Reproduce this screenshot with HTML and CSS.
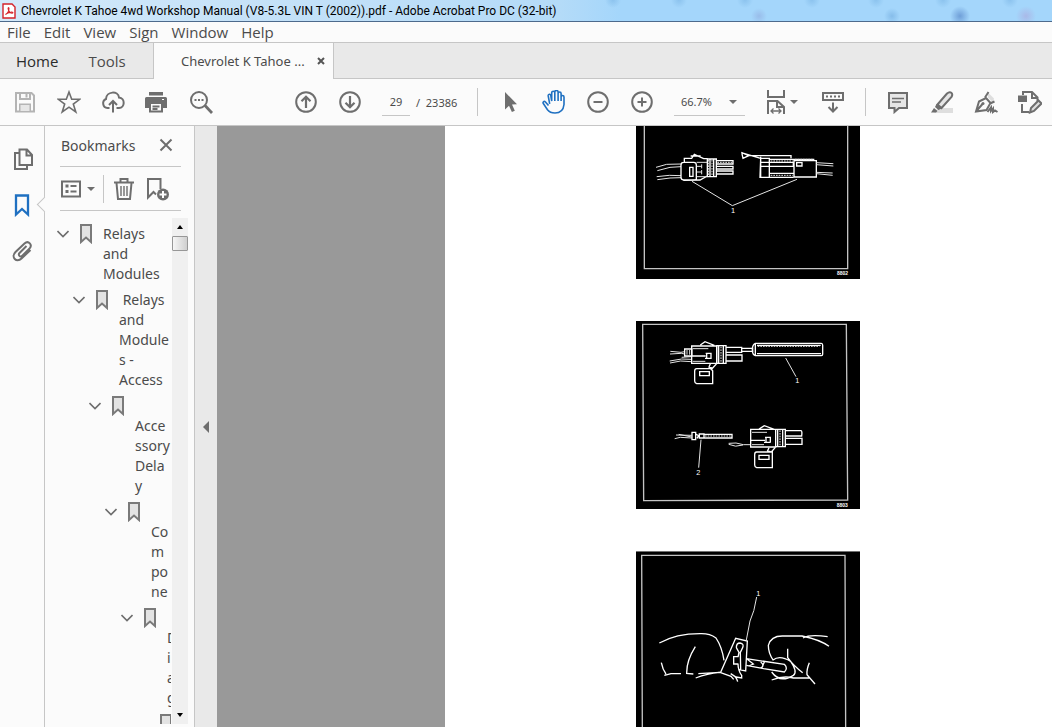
FILE: index.html
```
<!DOCTYPE html>
<html lang="en">
<head>
  <meta charset="UTF-8">
  <meta name="viewport" content="width=device-width, initial-scale=1">
  <title>Chevrolet K Tahoe 4wd Workshop Manual</title>
  <link rel="stylesheet" href="styles.css">
</head>
<body>

  <header class="titlebar">
    <svg class="app-icon" width="14" height="16" viewBox="0 0 14 16">
      <path d="M1 1h9l3 3v11H1z" fill="#fff" stroke="#d4232b" stroke-width="1.4"/>
      <path d="M3.500 11.500c2-1 3.500-4 3.500-6 0-1.500-1.300-1-.8.6.7 2.300 2.500 4 4 4.100 1.300 0 .8-1.300-1-1.100-2 .1-4.500 1-5.700 2.400z" fill="none" stroke="#d4232b" stroke-width="1.100"/>
    </svg>
    <span>Chevrolet K Tahoe 4wd Workshop Manual (V8-5.3L VIN T (2002)).pdf - Adobe Acrobat Pro DC (32-bit)</span>
  </header>

  <nav class="menubar">
    <button>File</button>
    <button>Edit</button>
    <button>View</button>
    <button>Sign</button>
    <button>Window</button>
    <button>Help</button>
  </nav>

  <nav class="tabs">
    <div class="tabs-main">
      <button class="home">Home</button>
      <button>Tools</button>
    </div>
    <div class="tab-doc">
      <button class="tab-name">Chevrolet K Tahoe ...</button>
      <button class="tab-close" aria-label="Close tab">
        <svg width="8" height="8" viewBox="0 0 8 8"><path d="M1 1l6 6M7 1L1 7" stroke="#555" stroke-width="2"/></svg>
      </button>
    </div>
  </nav>

  <div class="toolbar">
    <div class="group">
      <button class="tool disabled" aria-label="Save">
        <svg viewBox="0 0 24 24"><path d="M3 3h15.500l2.500 2.500V21.500H3z"/><path d="M7 3v6h10V3M13.500 4v3.500M7 21.500v-7h10v7" /><path d="M7.500 15h9v6h-9z" fill="#e6e6e6" stroke="none"/></svg>
      </button>
      <button class="tool" aria-label="Add to starred">
        <svg viewBox="0 0 24 24"><path d="M12 2l2.700 7.200 8 .1-6.400 4.700 2.500 7.900L12 17.200 5.200 21.900l2.500-7.900L1.300 9.300l8-.1z" stroke-width="1.600"/></svg>
      </button>
      <button class="tool" aria-label="Upload">
        <svg viewBox="0 0 24 24"><path d="M8.500 18H6.500A4.700 4.700 0 0 1 5 9c.2-8 12.300-8.500 13-1.500 6.500.5 6 10.500 0 10.500h-2.500"/><path d="M12 22.500V11.500M8 15l4-4 4 4"/></svg>
      </button>
      <button class="tool" aria-label="Print">
        <svg viewBox="0 0 24 24"><path d="M4 2h14v3.500H4zM0 8.500q0-1.500 1.500-1.500h19q1.500 0 1.500 1.500V18h-4v-4H4v4H0z" fill="#6e6e6e" stroke="none"/><path d="M5 14v7.500h12V14M7.500 16.500h7M7.500 19h5"/><path d="M17 9.500h2" stroke="#fff" stroke-width="1"/></svg>
      </button>
      <button class="tool" aria-label="Find text">
        <svg viewBox="0 0 24 24"><circle cx="10" cy="10" r="8"/><path d="M16 15.500l7 7.500" stroke-width="2.800"/><path d="M5.500 9h2v2h-2zM9 9h2v2H9zM12.500 9h2v2h-2z" fill="#6e6e6e" stroke="none"/></svg>
      </button>
    </div>

    <div class="group group-pages">
      <button class="tool" aria-label="Previous page">
        <svg viewBox="0 0 24 24"><circle cx="12" cy="12" r="9.800"/><path d="M12 18V7M7.500 11.200L12 6.700l4.500 4.500" stroke-width="2.200"/></svg>
      </button>
      <button class="tool" aria-label="Next page">
        <svg viewBox="0 0 24 24"><circle cx="12" cy="12" r="9.800"/><path d="M12 6v11M7.500 12.800l4.500 4.500 4.500-4.500" stroke-width="2.200"/></svg>
      </button>
      <input class="page-number" type="text" value="29" aria-label="Page number">
      <span class="page-total">/&nbsp; 23386</span>
    </div>

    <div class="group group-view">
      <button class="tool" aria-label="Select">
        <svg viewBox="0 0 24 24"><path d="M7 2l12 12.300-5 .3 2.800 6.200-2.900 1.300-2.900-6.300-4 3.600z" fill="#6e6e6e" stroke="none"/></svg>
      </button>
      <button class="tool active" aria-label="Pan">
        <svg viewBox="0 0 24 24"><path d="M6.500 15.500L3.500 12c-1.500-1.500-3.200.2-2 1.800l4 6C7.500 22.500 9.500 23 13 23c5.500 0 8.500-3.500 9-8.500V7c0-2-2.900-2-2.900 0v4V3.500c0-2-3-2-3 0V11 2c0-2-3.300-2-3.300 0v9V2.800c0-2-3.100-2-3.100 0V11L8.800 5.500c-.3-1.800-2.800-1.500-2.600.4l1.500 8" stroke-width="1.600"/></svg>
      </button>
      <button class="tool" aria-label="Zoom out">
        <svg viewBox="0 0 24 24"><circle cx="12" cy="12" r="9.800"/><path d="M7.500 12h9"/></svg>
      </button>
      <button class="tool" aria-label="Zoom in">
        <svg viewBox="0 0 24 24"><circle cx="12" cy="12" r="9.800"/><path d="M7.500 12h9M12 7.500v9"/></svg>
      </button>
      <div class="zoom">
        <select aria-label="Zoom level"><option>66.7%</option></select>
        <svg class="caret" width="8" height="4" viewBox="0 0 8 4"><path d="M0 0h8L4 4z"/></svg>
      </div>
      <button class="tool tool-fit" aria-label="Fit width">
        <svg viewBox="0 0 24 24"><path d="M4 0v7h16V0"/><path d="M4 24V11h9.500l6.500 6v7M13 11v6h7"/><path d="M7 21h10M9.500 18.500L7 21l2.500 2.500M14.500 18.500L17 21l-2.500 2.500" stroke-width="1.300"/></svg>
        <svg class="caret" width="8" height="4" viewBox="0 0 8 4"><path d="M0 0h8L4 4z"/></svg>
      </button>
      <button class="tool" aria-label="Page display">
        <svg viewBox="0 0 24 24"><path d="M2 3h20v7H2z"/><path d="M5 6.500h14" stroke-dasharray="2 2"/><path d="M12 12.500v9M7.500 17l4.500 4.500 4.500-4.500"/></svg>
      </button>
    </div>

    <div class="group group-annotate">
      <button class="tool" aria-label="Add comment">
        <svg viewBox="0 0 24 24"><path d="M3 3h18v15h-8l-4.500 4V18H3z" fill="#e6e6e6"/><path d="M6 8.500h12M6 12h9" stroke-width="1.300"/></svg>
      </button>
      <button class="tool" aria-label="Highlight">
        <svg viewBox="0 0 24 24"><path d="M8 18h15v5H4z" fill="#dedede" stroke="none"/><path d="M7.500 14.500L17 3.500c3.500-3 6.500 0 4.500 3.500L11.500 18z" fill="#e6e6e6"/><path d="M6.500 14l5 4.500-3 1.500-3.500-3zM4 18l3.500 3-1.500 1.500H1z" fill="#6e6e6e" stroke="none"/></svg>
      </button>
      <button class="tool" aria-label="Sign document">
        <svg viewBox="0 0 24 24"><path d="M14 2.500l6 6-1 4-5-5z" fill="#dedede" stroke="none"/><path d="M2 21.500L5 11.500l7-3.500 4.500 5L12.500 20zM2 21.500l6.500-7.500M11 7.500l3.500-5.500M16 13.500l4.500-2"/><circle cx="9" cy="13.500" r="1.500" fill="#6e6e6e" stroke="none"/><path d="M13.500 22l3.500-4.500V21l2-2.500V22l2-1.500 2.500 1.500"/></svg>
      </button>
      <button class="tool" aria-label="Edit document">
        <svg viewBox="0 0 24 24"><path d="M5 5V2h9l5.500 5.500V11M14 2v6h5.500M4 14v8h7"/><path d="M0 5.500h9v6.500H0z" fill="#6e6e6e" stroke="none"/><path d="M12 22.500l1-4.500 7.500-7.500 3 3-7.500 7.500z" fill="#dedede"/></svg>
      </button>
    </div>
  </div>

  <main class="workspace">
    <nav class="rail">
      <button aria-label="Page thumbnails">
        <svg viewBox="0 0 24 24"><path d="M8.500 2.500h7.500l5 5.500v10H8.500zM15.500 3v5.500h5"/><path d="M8 6H4v16h12v-3.500"/></svg>
      </button>
      <button class="active" aria-label="Bookmarks">
        <svg viewBox="0 0 24 24"><path d="M5 2.500h12v19l-6-5.500-6 5.500z" stroke-width="2.300"/></svg>
      </button>
      <button aria-label="Attachments">
        <svg viewBox="0 0 24 24"><path d="M15.500 7L8.500 14c-2 2 .8 4.800 2.800 2.800l7-7C22 6 17.500 1 13.500 4.500L4.500 13C-.5 18 5.500 24.500 10.500 19.500L19.500 11"/></svg>
      </button>
    </nav>

    <aside class="panel">
      <div class="panel-head">
        <h2>Bookmarks</h2>
        <button aria-label="Close panel">
          <svg width="14" height="14" viewBox="0 0 14 14"><path d="M1.500 1.500l11 11M12.500 1.500l-11 11" stroke="#6e6e6e" stroke-width="2"/></svg>
        </button>
      </div>
      <div class="panel-tools">
        <button class="options" aria-label="Options">
          <svg width="20" height="18" viewBox="0 0 20 18"><path d="M1 1.500h18v15H1z"/><path d="M4.500 6h3M4.500 11.500h3" stroke-width="3"/><path d="M9.500 6h6M9.500 11.500h6"/></svg>
          <svg class="caret" width="8" height="4" viewBox="0 0 8 4"><path d="M0 0h8L4 4z"/></svg>
        </button>
        <button class="trash" aria-label="Delete bookmark">
          <svg width="20" height="22" viewBox="0 0 20 22"><path d="M0 4.500h20M6.500 4V1h7v3M2.500 5l1.500 16h12l1.500-16"/><path d="M7 8v10M10 8v10M13 8v10" stroke-width="1.400"/></svg>
        </button>
        <button aria-label="New bookmark">
          <svg width="24" height="24" viewBox="0 0 24 24"><path d="M10 17.500L7.500 15 2 20.500V2h12.500v10"/><circle cx="17" cy="17.500" r="6" fill="#6e6e6e" stroke="none"/><path d="M13.500 17.500h7M17 14v7" stroke="#fff"/></svg>
        </button>
      </div>

      <div class="tree-wrap">
        <ul class="tree" id="tree"></ul>
        <div class="scrollbar">
          <button aria-label="Scroll up"><svg width="6" height="4" viewBox="0 0 6 4"><path d="M0 4h6L3 0z"/></svg></button>
          <div class="thumb"></div>
          <button class="down" aria-label="Scroll down"><svg width="6" height="4" viewBox="0 0 6 4"><path d="M0 0h6L3 4z"/></svg></button>
        </div>
      </div>
    </aside>

    <button class="collapse" aria-label="Collapse panel">
      <svg width="6" height="12" viewBox="0 0 6 12"><path d="M6 0v12L0 6z" fill="#6e6e6e"/></svg>
    </button>

    <div class="viewer">
      <article class="sheet">
        <svg class="figure" width="224" height="153" viewBox="18 18 672 459">
          <path class="frame" d="M43 18V446H653V18"/>
          <path d="M78 142L110 133 153 132M82 152L120 142 153 140M80 170L118 166 153 167M82 179L120 174 153 173"/>
          <path class="bold" d="M153 135q0-8 8-8h30q8 0 8 8v45h-38q-8 0-8-8zM179 169v-27h10v27zM163 127v-12h22l8-12 28 13h12M182 108h30M160 181l50-1 22-12"/>
          <path d="M200 139h15M215 133v12M200 156h15M215 150v13M200 127h32M200 170h32"/>
          <path class="bold" d="M232 117h27v53h-27zM240 117v53M251 117v53M259 122h50v10h-50M259 139h50v8h-50M259 153h50v9h-50"/>
          <path class="dash" d="M236 120v48M246 120v48M262 127h44"/>
          <path class="bold" d="M392 115h26v57h-28zM392 110v62M334 98l58 17M335 97l4 18 17-8-22-10M356 107h127v8M418 118h135M392 127h98v12h-98M418 160h74M418 172h72M492 122h67v49h-67zM500 138v-10h16v10z"/>
          <path class="dash" d="M422 123h66M422 166h66M495 118h55"/>
          <path d="M559 128l51 3M559 134l51 4M559 157l49 2M559 161l49 5"/>
          <path d="M186 184L307 257 501 178"/>
          <text x="303" y="280" class="num">1</text>
          <text x="621" y="466" class="code">8802</text>
        </svg>

        <svg class="figure" width="224" height="188" viewBox="18 18 672 564">
          <path class="frame" d="M38 28H649L653 555 41 557z"/>
          <path d="M121 109l32 3 10-2M120 117l34-2 10 2M119 138l36-6 29 1M120 144l32-6 32 2M155 127l29-2"/>
          <path class="bold" d="M164 102h22v21h-22zM185 93h75v52h-75zM211 90l14-10 28 11M185 123h42M225 130h20M227 115h16v15M230 130v-15"/>
          <path d="M171 105v14M179 105v14M188 101h47M188 139h38"/>
          <path class="bold" d="M260 92h28v53h-28zM266 92v53M280 92v53M288 97h47v15h-47M288 120h48v18h-48M336 100h32v9h-32"/>
          <path class="dash" d="M273 95v47"/>
          <path class="bold" d="M376 85h198q4 0 4 6v27q0 4-4 4H376q-9-3-9-18t9-19zM376 87v34M381 91h191M381 116h192"/>
          <path class="dash" d="M383 94h185"/>
          <path class="bold" d="M241 146l-4 10 12 4M260 146l-12 13-4 6M200 161h42l6 6v39h-48q-6-2-6-8v-29q0-8 6-8zM209 170h29v12h-29z"/>
          <path d="M467 129L498 185"/>
          <text x="496" y="205" class="num">1</text>
          <path d="M138 360l47 1M134 371l17-4 34 2M146 358l39 8"/>
          <path class="bold" d="M186 352h11v22h-11zM197 357l9 5-5 8M208 357h14v12h-14zM222 358h84v11h-84z"/>
          <path class="dash" d="M225 363h77"/>
          <path d="M213 374L206 458"/>
          <text x="199" y="480" class="num">2</text>
          <path d="M296 385l22-1 22 5h22M296 388q20 10 43 2"/>
          <path class="bold" d="M362 343h75v53h-75zM387 342l16-10 30 11M362 376h43M402 382h20M405 367h16v15M408 382v-15M437 343h29v52h-29zM443 343v52M458 343v52M466 347h47q4 0 2 16h-49M466 370h50v18h-50"/>
          <path d="M366 352h45M366 389h36"/>
          <path class="dash" d="M450 346v46"/>
          <path class="bold" d="M417 398l-4 9 14 5M436 397l-12 14M380 411h47v47h-47q-6-2-6-8v-31q0-8 6-8zM387 421h30v12h-30z"/>
          <text x="620" y="575" class="code">8803</text>
        </svg>

        <svg class="figure" width="224" height="176" viewBox="18 17 672 528">
          <path d="M18 18h672" stroke="#888"/>
          <path class="frame" d="M37 545L35 30H645L647 545"/>
          <path class="bold" d="M88 293Q140 264 215 265 240 265 258 278 276 305 282 345M196 304Q170 345 170 382M94 352q4 21 14 34M103 390l20-5h30M168 384l22 2M205 385l65-4 33 12 8 9M197 398q35-14 72-17"/>
          <path d="M380 155Q373 200 360 227L349 284"/>
          <text x="379" y="151" class="num">1</text>
          <path class="bold" d="M272 381L317 279 352 287 347 377 328 373M319 307q0-14 11-14 13 2 8 14l-7 14 1 52M319 307l8 14-3 14M325 334h-14v22h14M324 355q0 20 11 35v8l-17-3-16-10M309 390q10 3 14 19"/>
          <path class="bold" d="M349 340L463 357q12 12 0 23L401 370 349 360M352 342l18 14-14 6M392 350q14 10 0 19M403 350l-8 18"/>
          <path class="bold" d="M425 380q25 35 65 10 14-10-8-42-33-20-53-4M430 345q-15-20-15-45 8-29 44-28h57Q570 283 597 303M519 278q20-12 74-4M473 310v27q20 27 45 45M538 352q-9 22-7 36l24 28M425 404q35-14 65-6h50"/>
        </svg>
      </article>
    </div>
  </main>

  <script>
    // label lines are broken where the narrow panel cuts them
    const bookmarks = [
      ['Relays', 'and', 'Modules'],
      ['\u00a0Relays', 'and', 'Module', 's -', 'Access'],
      ['', 'Acce', 'ssory', 'Dela', 'y'],
      ['', 'Co', 'm', 'po', 'ne'],
      ['', 'D', 'i', 'a', 'g'],
      ['']
    ];

    const tree = document.getElementById('tree');

    bookmarks.forEach((lines, level) => {
      const item = document.createElement('li');
      // the last one has no children to open
      if (level === bookmarks.length - 1) item.className = 'leaf';
      item.style.marginLeft = level * 16 + 'px';
      item.innerHTML = `
        <svg class="chevron" width="12" height="8" viewBox="0 0 12 8"><path d="M.5 1L6 6.500 11.500 1"/></svg>
        <svg class="mark" width="12" height="20" viewBox="0 0 12 20"><path d="M1 1h10v17l-5-4.500L1 18z"/></svg>
        <span>${lines.map(line => line || '&nbsp;').join('<br>')}</span>
      `;
      tree.appendChild(item);
    });
  </script>

</body>
</html>
```

FILE: styles.css
```
* {
  box-sizing: border-box;
}
body {
  display: flex;
  flex-direction: column;
  height: 100vh;
  margin: 0;
  overflow: hidden;
  font-family: 'Noto Sans', 'Open Sans', sans-serif;
  font-size: 14px;
  color: #4b4b4b;
  background: #fbfbfb;
}
button {
  padding: 0;
  border: none;
  background: none;
  font: inherit;
  color: inherit;
}
svg {
  display: block;
  flex: none;
}

/* window title */
.titlebar {
  display: flex;
  align-items: center;
  gap: 5px;
  height: 22px;
  padding-left: 2px;
  flex: none;
  font-family: Roboto, sans-serif;
  font-size: 12px;
  color: #000;
  white-space: nowrap;
  border-bottom: 1px solid #4d6a8c;
  background:
    radial-gradient(circle at 613px 0, #8cc3ee 0, transparent 8px),
    radial-gradient(circle at 679px 0, #8cc3ee 0, transparent 8px),
    radial-gradient(circle at 745px 0, #8cc3ee 0, transparent 8px),
    radial-gradient(circle at 812px 0, #8cc3ee 0, transparent 8px),
    radial-gradient(circle at 876px 0, #8cc3ee 0, transparent 8px),
    radial-gradient(circle at 943px 0, #8cc3ee 0, transparent 8px),
    radial-gradient(circle at 1010px 0, #8cc3ee 0, transparent 8px),
    radial-gradient(circle at 759px 16px, #99bdea 0, transparent 8px),
    radial-gradient(circle at 892px 16px, #86bdea 0, transparent 8px),
    radial-gradient(circle at 960px 16px, #6f9fd8 0, transparent 10px),
    radial-gradient(circle at 1026px 16px, #a9b9e8 0, transparent 10px),
    linear-gradient(90deg, #d3e9fa 0, #c3e1f8 300px, #b4dbf8 560px, #a4d6fb 620px);
}

/* menu and tabs */
.menubar {
  display: flex;
  gap: 13px;
  height: 21px;
  padding-left: 7px;
  flex: none;
  font-family: 'Open Sans', sans-serif;
  font-size: 15px;
  line-height: 20px;
  border-bottom: 1px solid #c6c6c6;
}
.tabs {
  display: flex;
  height: 36px;
  flex: none;
  background: #e9e9e9;
}
.tabs::after {
  content: '';
  flex: 1;
  border-bottom: 1px solid #c6c6c6;
}
.tabs-main {
  display: flex;
  gap: 30px;
  width: 154px;
  padding-left: 16px;
  font-family: 'Open Sans', sans-serif;
  font-size: 15px;
  border-right: 1px solid #c6c6c6;
  border-bottom: 1px solid #c6c6c6;
}
.tabs-main .home {
  color: #2c2c2c;
}
.tab-doc {
  display: flex;
  align-items: center;
  justify-content: space-between;
  width: 180px;
  padding: 0 8px 0 27px;
  font-size: 13px;
  background: #fbfbfb;
  border-right: 1px solid #c6c6c6;
}

/* toolbar */
.toolbar {
  display: flex;
  align-items: center;
  height: 47px;
  padding-left: 3px;
  flex: none;
  border-bottom: 1px solid #c6c6c6;
}
.group {
  display: flex;
  align-items: center;
  flex: none;
}
.group-pages {
  margin-left: 61px;
}
.group-view,
.group-annotate {
  position: relative;
  padding-left: 11px;
}
.group-view::before,
.group-annotate::before {
  content: '';
  position: absolute;
  left: 0;
  height: 28px;
  border-left: 1px solid #c6c6c6;
}
.group-view {
  margin-left: 20px;
}
.group-annotate {
  margin-left: 10px;
}
.tool {
  display: flex;
  align-items: center;
  justify-content: center;
  width: 44px;
  height: 44px;
}
.tool svg,
.rail svg,
.panel-tools svg {
  fill: none;
  stroke: #6e6e6e;
  stroke-width: 2;
}
.tool svg:not(.caret),
.rail svg {
  width: 24px;
  height: 24px;
}
.tool.disabled svg {
  stroke: #b4b4b4;
}
.tool.active svg,
.rail .active svg {
  stroke: #1f70c1;
}
svg.caret,
.tool svg.caret,
.panel-tools svg.caret {
  fill: #6e6e6e;
  stroke: none;
}
.page-number,
.zoom select {
  appearance: none;
  height: 28px;
  padding: 0;
  border: none;
  border-bottom: 1px solid #c6c6c6;
  border-radius: 0;
  background: none;
  font: inherit;
  font-size: 11px;
  color: #4b4b4b;
}
.page-number {
  width: 28px;
  margin-left: 10px;
  text-align: center;
}
.page-total {
  width: 47px;
  padding-left: 6px;
  font-size: 11px;
  white-space: nowrap;
}
.zoom {
  position: relative;
  width: 71px;
  margin: 0 16px 0 10px;
}
.zoom select {
  width: 100%;
  padding-left: 7px;
}
.zoom .caret {
  position: absolute;
  right: 8px;
  top: 12px;
  pointer-events: none;
}
.tool-fit {
  gap: 2px;
  margin: 0 8px 0 -2px;
}

/* left side */
.workspace {
  display: flex;
  flex: 1;
  min-height: 0;
}
.rail {
  display: flex;
  flex-direction: column;
  gap: 22px;
  width: 45px;
  padding: 21px 0 0 11px;
  flex: none;
  border-right: 1px solid #c6c6c6;
  position: relative;
}
.rail::after {
  content: '';
  position: absolute;
  right: -6px;
  top: 73px;
  width: 10px;
  height: 10px;
  background: #fbfbfb;
  border-left: 1px solid #c6c6c6;
  border-bottom: 1px solid #c6c6c6;
  transform: rotate(45deg);
}
.panel {
  display: flex;
  flex-direction: column;
  width: 150px;
  flex: none;
  border-right: 1px solid #c6c6c6;
}
.panel-head {
  display: flex;
  align-items: center;
  justify-content: space-between;
  height: 41px;
  margin: 0 13px 0 15px;
  padding: 0 8px 2px 1px;
  border-bottom: 1px solid #c6c6c6;
}
.panel-head h2 {
  margin: 0;
  font-size: 14px;
  font-weight: normal;
}
.panel-tools {
  display: flex;
  align-items: center;
  height: 44px;
  margin: 0 13px 0 15px;
  border-bottom: 1px solid #c6c6c6;
}
.options {
  display: flex;
  align-items: center;
  gap: 6px;
  height: 28px;
  width: 44px;
  padding-left: 1px;
  border-right: 1px solid #c6c6c6;
}
.trash {
  margin: 0 12px 0 10px;
}
.tree-wrap {
  display: flex;
  justify-content: space-between;
  flex: 1;
  min-height: 0;
  margin: 7px 6px 3px 12px;
}
.tree {
  width: 114px;
  margin: 0;
  padding: 6px 0 0;
  overflow: hidden;
  list-style: none;
  line-height: 20px;
}
.tree li {
  display: flex;
  margin-bottom: 6px;
  white-space: nowrap;
}
.tree .chevron {
  margin-top: 6px;
  fill: none;
  stroke: #6e6e6e;
  stroke-width: 1.6;
}
.tree .leaf .chevron {
  visibility: hidden;
}
.tree .mark {
  margin: 0 11px;
  fill: #e3e3e3;
  stroke: #7a7a7a;
  stroke-width: 2;
}
.scrollbar {
  display: flex;
  flex-direction: column;
  width: 16px;
  background: #f0f0f0;
}
.scrollbar button {
  display: flex;
  align-items: center;
  justify-content: center;
  height: 18px;
}
.scrollbar .down {
  margin-top: auto;
}
.scrollbar .thumb {
  height: 15px;
  border: 1px solid #979797;
  border-radius: 1px;
  background: linear-gradient(90deg, #f6f6f6, #cfcfcf);
}
.collapse {
  display: flex;
  align-items: center;
  width: 22px;
  padding-left: 8px;
  flex: none;
  background: #e9e9e9;
}

/* document */
.viewer {
  display: flex;
  flex: 1;
  min-width: 0;
  padding-left: 228px;
  background: #999;
}
.sheet {
  display: flex;
  flex-direction: column;
  flex: 1;
  gap: 42px;
  padding-left: 191px;
  overflow: hidden;
  background: #fff;
}
.figure {
  background: #000;
  fill: none;
  stroke: #e4e4e4;
  stroke-width: 3;
}
.figure .frame {
  stroke: #c4c4c4;
  stroke-width: 4;
}
.figure .bold {
  stroke: #fff;
  stroke-width: 4;
}
.figure .dash {
  stroke-dasharray: 5 3;
}
.figure text {
  fill: #fff;
  stroke: none;
  font-family: 'Liberation Sans', sans-serif;
}
.figure .num {
  font-size: 22px;
}
.figure .code {
  font-size: 15px;
  font-weight: bold;
}
```
